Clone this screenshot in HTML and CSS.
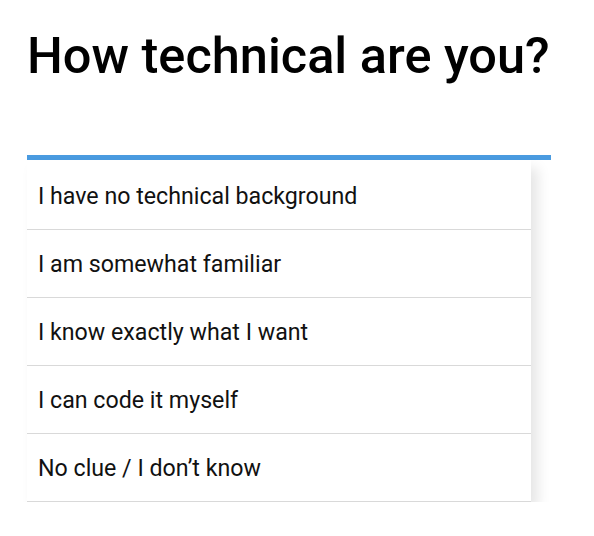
FILE: index.html
```html
<!DOCTYPE html>
<html>
<head>
<meta charset="utf-8">
<link rel="stylesheet" href="styles.css">
</head>
<body>
<div class="page">
  <h1 class="title">How technical are you?</h1>
  <div class="select">
    <div class="bar"></div>
    <ul class="options">
      <li class="option">I have no technical background</li>
      <li class="option">I am somewhat familiar</li>
      <li class="option">I know exactly what I want</li>
      <li class="option">I can code it myself</li>
      <li class="option">No clue / I don’t know</li>
    </ul>
  </div>
</div>
</body>
</html>
```
FILE: styles.css
```css
html, body {
  margin: 0;
  padding: 0;
  background: #fff;
}
body {
  font-family: Roboto, "Liberation Sans", sans-serif;
  color: #111;
}
.page {
  padding: 27px 0 0 27px;
  width: 524px;
}
.title {
  margin: 0;
  font-size: 50.5px;
  font-weight: 500;
  line-height: 58px;
  letter-spacing: 0;
  color: #000;
}
.select {
  margin-top: 70px;
}
.bar {
  height: 5px;
  background: #4a9be0;
}
.options {
  list-style: none;
  margin: 0;
  padding: 2px 0 0 0;
  width: 504px;
  background: #fff;
  box-shadow: 7px 8px 12px rgba(0, 0, 0, 0.1);
}
.option {
  height: 67px;
  display: flex;
  align-items: center;
  padding-left: 11px;
  font-size: 23.2px;
  color: #111;
  border-bottom: 1px solid #d9d9d9;
}
```
